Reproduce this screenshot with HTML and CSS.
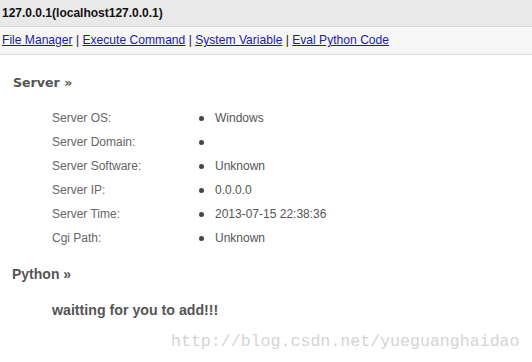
FILE: index.html
```html
<!DOCTYPE html>
<html lang="en">
<head>
  <meta charset="UTF-8">
  <title>127.0.0.1(localhost127.0.0.1)</title>
  <link rel="stylesheet" href="styles.css">
</head>
<body>
  <div class="topbar">127.0.0.1(localhost127.0.0.1)</div>
  <div class="menu">
    <a href="#">File Manager</a> | <a href="#">Execute Command</a> | <a href="#">System Variable</a> | <a href="#">Eval Python Code</a>
  </div>

  <h2 class="server">Server &raquo;</h2>
  <ul class="info">
    <li><span class="label">Server OS:</span><span class="value">Windows</span></li>
    <li><span class="label">Server Domain:</span><span class="value"></span></li>
    <li><span class="label">Server Software:</span><span class="value">Unknown</span></li>
    <li><span class="label">Server IP:</span><span class="value">0.0.0.0</span></li>
    <li><span class="label">Server Time:</span><span class="value">2013-07-15 22:38:36</span></li>
    <li><span class="label">Cgi Path:</span><span class="value">Unknown</span></li>
  </ul>

  <h2 class="python">Python &raquo;</h2>
  <p class="todo">waitting for you to add!!!</p>

  <div class="watermark">http://blog.csdn.net/yueguanghaidao</div>
</body>
</html>
```

FILE: styles.css
```css
body { margin: 0; font-family: "Liberation Sans", Arial, sans-serif; font-size: 12px; color: #333; background: #fff; }
.topbar { height: 26px; line-height: 26px; padding-left: 2px; background: #e9e9e9; border-bottom: 1px solid #d6d6d6; font-weight: bold; color: #111; }
.menu { height: 27px; line-height: 27px; padding-left: 2px; background: #f6f6f6; border-bottom: 1px solid #dcdcdc; color: #222; font-size: 12.1px; }
.menu a { color: #1a1aa6; }
h2 { font-weight: bold; color: #555; margin: 0; padding-left: 13px; }
.server { font-family: "DejaVu Sans", Verdana, sans-serif; font-size: 12.6px; margin-top: 20px; }
.python { font-size: 14px; padding-left: 12px; margin-top: 16px; }
.info { list-style: none; margin: 16px 0 0; padding: 0 0 0 52px; }
.info li { display: flex; height: 24px; line-height: 24px; color: #666; }
.label { width: 147px; }
.value { position: relative; padding-left: 16px; color: #555; }
.value::before { content: ""; position: absolute; left: 0; top: 10px; width: 5px; height: 5px; border-radius: 50%; background: #444; }
.todo { margin: 20px 0 0 52px; font-size: 14.2px; font-weight: bold; color: #555; }
.watermark { margin: 14px 0 0 171px; font-family: "Liberation Mono", "Courier New", monospace; font-size: 16.6px; color: #d4d4d4; }
```
